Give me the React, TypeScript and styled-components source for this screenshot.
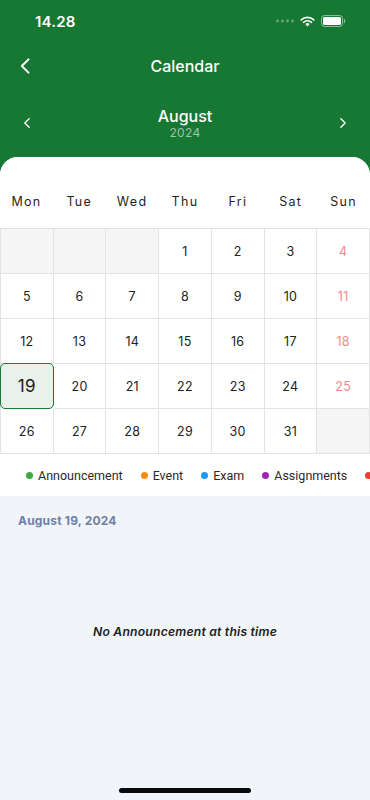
import React, { FC } from "react";
import styled, { createGlobalStyle } from "styled-components";

const GREEN = "#177833";
const LINE = "#e3e3e3";

const GlobalStyle = createGlobalStyle`
    html, body, #root {
        margin: 0;
        padding: 0;
        height: 100%;
    }
    body {
        font-family: Inter, "Noto Sans", sans-serif;
        -webkit-font-smoothing: antialiased;
    }
`;

const Screen = styled.div`
    position: relative;
    display: flex;
    flex-direction: column;
    width: 370px;
    height: 800px;
    overflow: hidden;
    background-color: ${GREEN};
`;

const StatusBar = styled.div`
    display: flex;
    justify-content: space-between;
    align-items: center;
    height: 44px;
    padding: 0 24px 2px 35px;
    box-sizing: border-box;
    color: white;
`;

const Time = styled.span`
    font-size: 15px;
    font-weight: 600;
    letter-spacing: 0.2px;
`;

const StatusIcons = styled.div`
    display: flex;
    align-items: center;
    gap: 6px;
`;

const NavBar = styled.div`
    display: flex;
    align-items: center;
    justify-content: center;
    position: relative;
    height: 44px;
    color: white;
`;

const Title = styled.h1`
    margin: 0;
    font-size: 16px;
    font-weight: 500;
`;

const IconButton = styled.button<{ $side: "left" | "right"; $offset: number }>`
    position: absolute;
    top: 50%;
    ${(p) => p.$side}: ${(p) => p.$offset}px;
    transform: translateY(-50%);
    display: flex;
    padding: 0;
    border: none;
    background: none;
    cursor: pointer;
`;

const MonthNav = styled.div`
    position: relative;
    display: flex;
    flex-direction: column;
    align-items: center;
    padding: 18px 0 17px;
`;

const MonthName = styled.div`
    color: white;
    font-size: 16px;
    font-weight: 500;
    line-height: 20px;
`;

const YearName = styled.div`
    color: #9cc4a6;
    font-size: 12px;
    line-height: 14px;
    letter-spacing: 0.3px;
`;

const Card = styled.div`
    flex: 1;
    display: flex;
    flex-direction: column;
    border-radius: 18px 18px 0 0;
    overflow: hidden;
    background-color: #f1f4f9;
`;

const CalendarPanel = styled.div`
    background-color: white;
`;

const WeekRow = styled.div`
    display: grid;
    grid-template-columns: repeat(7, 1fr);
    padding: 37px 0 18px;
`;

const WeekDay = styled.div`
    text-align: center;
    font-size: 12.5px;
    line-height: 16px;
    letter-spacing: 1.3px;
    color: #1f1f1f;
`;

const DayGrid = styled.div`
    display: grid;
    grid-template-columns: repeat(7, 1fr);
    border-top: 1px solid ${LINE};
    border-left: 1px solid ${LINE};
`;

const DayCell = styled.div<{ $empty?: boolean; $weekend?: boolean; $selected?: boolean }>`
    display: flex;
    align-items: center;
    justify-content: center;
    height: 45px;
    box-sizing: border-box;
    border-right: 1px solid ${LINE};
    border-bottom: 1px solid ${LINE};
    background-color: ${(p) => (p.$empty ? "#f5f5f5" : "white")};
    color: ${(p) => (p.$weekend ? "#f2898a" : "#222")};
    font-size: 12.5px;
    letter-spacing: 0.3px;

    ${(p) =>
        p.$selected &&
        `
        margin: -1px 0 0 -1px;
        height: 46px;
        border: 1px solid ${GREEN};
        border-radius: 5px;
        background-color: #e8f1ea;
        font-size: 17px;
        color: #1a1a1a;
    `}
`;

const Legend = styled.div`
    display: flex;
    align-items: center;
    gap: 18px;
    height: 42px;
    padding-left: 26px;
    white-space: nowrap;
    overflow-x: auto;
    scrollbar-width: none;
    &::-webkit-scrollbar {
        display: none;
    }
`;

const LegendItem = styled.div`
    display: flex;
    align-items: center;
    gap: 5px;
    font-family: Roboto, "Noto Sans", sans-serif;
    font-size: 12.5px;
    color: #2a2a2a;
`;

const Dot = styled.span<{ $color: string }>`
    width: 7px;
    height: 7px;
    border-radius: 50%;
    background-color: ${(p) => p.$color};
    flex-shrink: 0;
`;

const Details = styled.div`
    flex: 1;
    display: flex;
    flex-direction: column;
    padding: 17px 18px 0;
`;

const DateLabel = styled.div`
    font-size: 12px;
    font-weight: 700;
    line-height: 16px;
    color: #6f80a4;
    letter-spacing: 0.2px;
`;

const EmptyText = styled.div`
    margin-top: 95px;
    text-align: center;
    font-size: 12.2px;
    font-weight: 600;
    font-style: italic;
    color: #1e1e1e;
    letter-spacing: 0.2px;
`;

const HomeIndicator = styled.div`
    position: absolute;
    left: 50%;
    bottom: 7px;
    transform: translateX(-50%);
    width: 132px;
    height: 5px;
    border-radius: 3px;
    background-color: #0a0a0a;
`;

const Chevron: FC<{ dir: "left" | "right"; size: number; stroke?: number }> = ({ dir, size, stroke = 2.2 }) => (
    <svg width={size} height={size} viewBox="0 0 24 24" fill="none" stroke="white" strokeWidth={stroke} strokeLinecap="round" strokeLinejoin="round">
        {dir === "left" ? <path d="M15 4 L7 12 L15 20" /> : <path d="M9 4 L17 12 L9 20" />}
    </svg>
);

const WEEKDAYS = ["Mon", "Tue", "Wed", "Thu", "Fri", "Sat", "Sun"];

const LEGEND = [
    { label: "Announcement", color: "#3bab3f" },
    { label: "Event", color: "#fb8c12" },
    { label: "Exam", color: "#2196f3" },
    { label: "Assignments", color: "#9c27b0" },
    { label: "Holiday", color: "#f23b2f" },
];

// August 2024 starts on a Thursday (3 empty slots before, 1 after)
const cells: (number | null)[] = [null, null, null, ...Array.from({ length: 31 }, (_, i) => i + 1), null];

export default function App() {
    return (
        <>
            <GlobalStyle />
            <Screen>
                <StatusBar>
                    <Time>14.28</Time>
                    <StatusIcons>
                        <svg width="18" height="4" viewBox="0 0 18 4">
                            {[0, 5, 10, 15].map((x) => (
                                <circle key={x} cx={x + 1.5} cy="2" r="1.4" fill="rgba(255,255,255,0.35)" />
                            ))}
                        </svg>
                        <svg width="15" height="11" viewBox="0 0 15 11">
                            <path d="M7.5 10.5 L5.3 8.1 A3.2 3.2 0 0 1 9.7 8.1 Z" fill="white" />
                            <path d="M3.5 6.3 A5.8 5.8 0 0 1 11.5 6.3" stroke="white" strokeWidth="1.6" fill="none" strokeLinecap="round" />
                            <path d="M1.2 3.9 A9 9 0 0 1 13.8 3.9" stroke="white" strokeWidth="1.6" fill="none" strokeLinecap="round" />
                        </svg>
                        <svg width="25" height="12" viewBox="0 0 25 12">
                            <rect x="0.5" y="0.5" width="21" height="11" rx="3" fill="none" stroke="rgba(255,255,255,0.5)" />
                            <rect x="2" y="2" width="18" height="8" rx="1.6" fill="white" />
                            <path d="M23 4 Q24.5 6 23 8" stroke="rgba(255,255,255,0.5)" strokeWidth="1.2" fill="none" />
                        </svg>
                    </StatusIcons>
                </StatusBar>

                <NavBar>
                    <IconButton $side="left" $offset={16}>
                        <Chevron dir="left" size={20} stroke={2.4} />
                    </IconButton>
                    <Title>Calendar</Title>
                </NavBar>

                <MonthNav>
                    <IconButton $side="left" $offset={21}>
                        <Chevron dir="left" size={13} stroke={2.6} />
                    </IconButton>
                    <MonthName>August</MonthName>
                    <YearName>2024</YearName>
                    <IconButton $side="right" $offset={21}>
                        <Chevron dir="right" size={13} stroke={2.6} />
                    </IconButton>
                </MonthNav>

                <Card>
                    <CalendarPanel>
                        <WeekRow>
                            {WEEKDAYS.map((d) => (
                                <WeekDay key={d}>{d}</WeekDay>
                            ))}
                        </WeekRow>
                        <DayGrid>
                            {cells.map((day, i) => (
                                <DayCell
                                    key={i}
                                    $empty={day === null}
                                    $weekend={i % 7 === 6}
                                    $selected={day === 19}
                                >
                                    {day}
                                </DayCell>
                            ))}
                        </DayGrid>
                        <Legend>
                            {LEGEND.map((item) => (
                                <LegendItem key={item.label}>
                                    <Dot $color={item.color} />
                                    {item.label}
                                </LegendItem>
                            ))}
                        </Legend>
                    </CalendarPanel>

                    <Details>
                        <DateLabel>August 19, 2024</DateLabel>
                        <EmptyText>No Announcement at this time</EmptyText>
                    </Details>
                </Card>

                <HomeIndicator />
            </Screen>
        </>
    );
}
